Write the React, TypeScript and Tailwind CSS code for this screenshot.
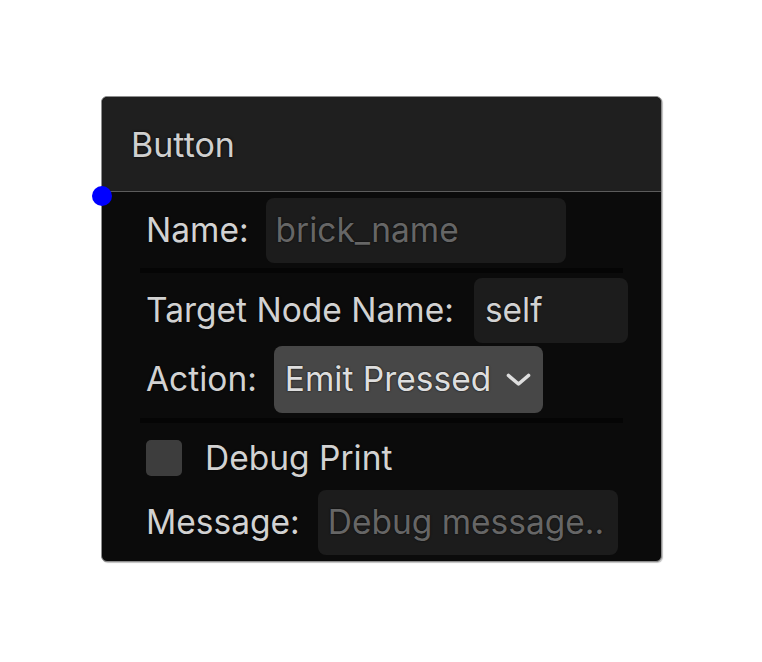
import React from "react";

const font = { fontFamily: "Inter, 'Noto Sans', sans-serif" };

export default function App() {
  return (
    <div className="w-[762px] h-[662px] bg-white pt-[96px] pl-[101px]" style={font}>
      <div className="relative w-[561px] h-[466px] rounded-[6px] border border-[#8e8e8e] bg-[#0b0b0b] shadow-[1px_1px_1px_rgba(0,0,0,0.25)]">
        <div className="h-[95px] bg-[#1f1f1f] rounded-t-[6px] border-b border-[#5c5c5c] flex items-center pl-[29px] text-[34px] text-[#cfcfcf] [text-shadow:0_0_3px_rgba(0,0,0,0.9)]">
          Button
        </div>
        <div className="absolute left-[-10px] top-[89px] w-[20px] h-[20px] rounded-full bg-[#0000ff]" />
        <div className="px-[38px] pt-[6px] text-[33.5px] text-[#d2d2d2] whitespace-nowrap [text-shadow:0_0_2px_rgba(0,0,0,0.9)]">
          <div className="flex items-center gap-[17px] pl-[6px] h-[65px]">
            <span className="shrink-0">Name:</span>
            <div className="shrink-0 w-[300px] h-[65px] rounded-[8px] bg-[#1c1c1c] flex items-center pl-[10px] text-[#666666]">
              brick_name
            </div>
          </div>
          <div className="mt-[5px] h-[5px] bg-[#050505]" />
          <div className="mt-[5px] flex items-center gap-[20px] pl-[6px] h-[65px]">
            <span className="shrink-0">Target Node Name:</span>
            <div className="shrink-0 w-[154px] h-[65px] rounded-[8px] bg-[#1c1c1c] flex items-center pl-[11px] text-[#d2d2d2]">
              self
            </div>
          </div>
          <div className="mt-[3px] flex items-center gap-[17px] pl-[6px] h-[67px]">
            <span className="shrink-0">Action:</span>
            <div className="shrink-0 h-[67px] rounded-[8px] bg-[#474747] flex items-center pl-[11px] pr-[12px] gap-[15px] text-[#dedede]">
              <span>Emit Pressed</span>
              <svg width="25" height="14" viewBox="0 0 25 14" fill="none">
                <path d="M2.5 2.5 L12.5 11 L22.5 2.5" stroke="#dedede" strokeWidth="3.6" strokeLinecap="round" strokeLinejoin="round" />
              </svg>
            </div>
          </div>
          <div className="mt-[5px] h-[5px] bg-[#050505]" />
          <div className="mt-[17px] flex items-center gap-[23px] pl-[6px] h-[36px]">
            <div className="shrink-0 w-[36px] h-[36px] rounded-[5px] bg-[#3d3d3d]" />
            <span>Debug Print</span>
          </div>
          <div className="mt-[14px] flex items-center gap-[18px] pl-[6px] h-[65px]">
            <span className="shrink-0">Message:</span>
            <div className="shrink-0 w-[300px] h-[65px] rounded-[8px] bg-[#1c1c1c] flex items-center pl-[10px] text-[#666666] overflow-hidden">
              Debug message..
            </div>
          </div>
        </div>
      </div>
    </div>
  );
}
